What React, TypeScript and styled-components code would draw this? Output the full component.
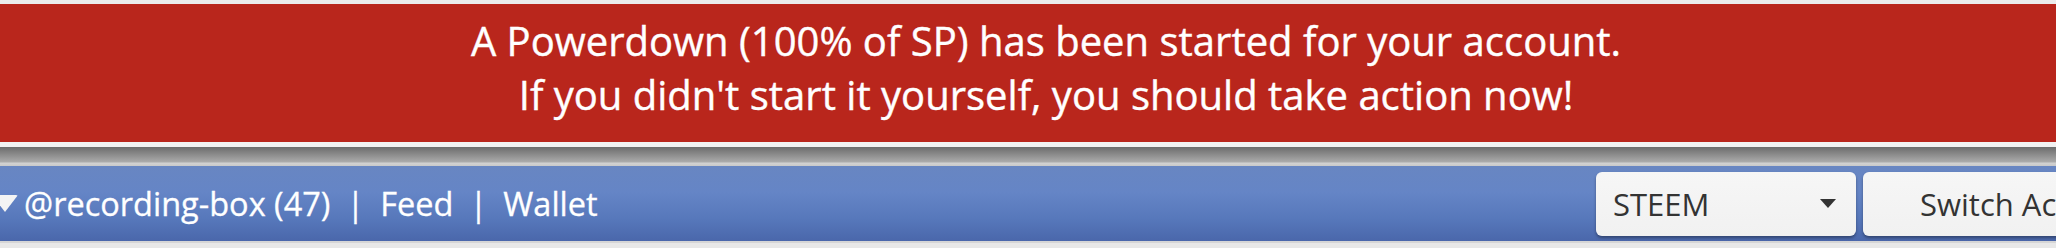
import React from 'react'
import styled, { createGlobalStyle } from 'styled-components'

const GlobalStyle = createGlobalStyle`
	html, body {
		margin: 0;
		padding: 0;
		background: #ececec;
		overflow: hidden;
	}
`

const Page = styled.div`
	width: 2092px;
	padding-top: 4px;
	padding-bottom: 7px;
	overflow: hidden;
	font-family: 'Open Sans', 'Noto Sans', sans-serif;
	background: linear-gradient(#ececec, #ececec) top / 100% 4px no-repeat,
		linear-gradient(#d6d6d6 0 2px, #e8e8e8 2px) bottom / 100% 7px no-repeat;
`

const Banner = styled.div`
	box-sizing: border-box;
	height: 138px;
	padding-top: 10px;
	background: #b9261c;
	color: #ffffff;
	text-align: center;
	font-size: 40px;
	line-height: 54px;
	-webkit-text-stroke: 0.4px #ffffff;
`

const Rule = styled.div`
	height: 24px;
	background: linear-gradient(
		to bottom,
		#f2f2f2 0,
		#f2f2f2 5px,
		#6c6c6c 5px,
		#9a9a9a 16px,
		#ababab 20px,
		#d2d2d2 21px,
		#c9c9c9 24px
	);
`

const NavBar = styled.div`
	height: 75px;
	display: flex;
	align-items: center;
	background: linear-gradient(to bottom, #6886c2 0%, #6585c6 35%, #5778bb 70%, #4a67ab 100%);
	color: #ffffff;
	font-size: 32.5px;
`

const LeftGroup = styled.div`
	flex: 1;
	display: flex;
	align-items: center;
	white-space: nowrap;
	-webkit-text-stroke: 0.3px #ffffff;
`

const Caret = styled.span<{ dark?: boolean }>`
	display: inline-block;
	width: 0;
	height: 0;
	border-left: ${p => (p.dark ? '8px' : '13px')} solid transparent;
	border-right: ${p => (p.dark ? '8px' : '13px')} solid transparent;
	border-top: ${p => (p.dark ? '9px' : '17px')} solid ${p => (p.dark ? '#333333' : '#f4f4f4')};
`

const UserCaret = styled(Caret)`
	margin-left: -8px;
	margin-right: 6px;
	border-radius: 2px;
`

const NavLink = styled.span``

const Pipe = styled.span`
	padding: 0 16px;
`

const RightGroup = styled.div`
	flex: none;
	width: 496px;
	display: flex;
	gap: 7px;
	align-items: center;
`

const Box = styled.div`
	box-sizing: border-box;
	height: 64px;
	display: flex;
	align-items: center;
	background: linear-gradient(to bottom, #f6f6f6, #f1f1f1);
	border-radius: 6px;
	box-shadow: 0 2px 3px rgba(0, 0, 0, 0.35);
	color: #333333;
	font-size: 31px;
	white-space: nowrap;
	flex: none;
`

const Select = styled(Box)`
	width: 260px;
	padding: 0 20px 0 17px;
	justify-content: space-between;
`

const SwitchButton = styled(Box)`
	width: 340px;
	padding-left: 57px;
`

export default function App() {
	return (
		<>
			<GlobalStyle />
			<Page>
				<Banner>
					A Powerdown (100% of SP) has been started for your account.
					<br />
					If you didn't start it yourself, you should take action now!
				</Banner>
				<Rule />
				<NavBar>
					<LeftGroup>
						<UserCaret />
						<NavLink>@recording-box (47)</NavLink>
						<Pipe>|</Pipe>
						<NavLink>Feed</NavLink>
						<Pipe>|</Pipe>
						<NavLink>Wallet</NavLink>
					</LeftGroup>
					<RightGroup>
						<Select>
							<span>STEEM</span>
							<Caret dark />
						</Select>
						<SwitchButton>Switch Account</SwitchButton>
					</RightGroup>
				</NavBar>
			</Page>
		</>
	)
}
